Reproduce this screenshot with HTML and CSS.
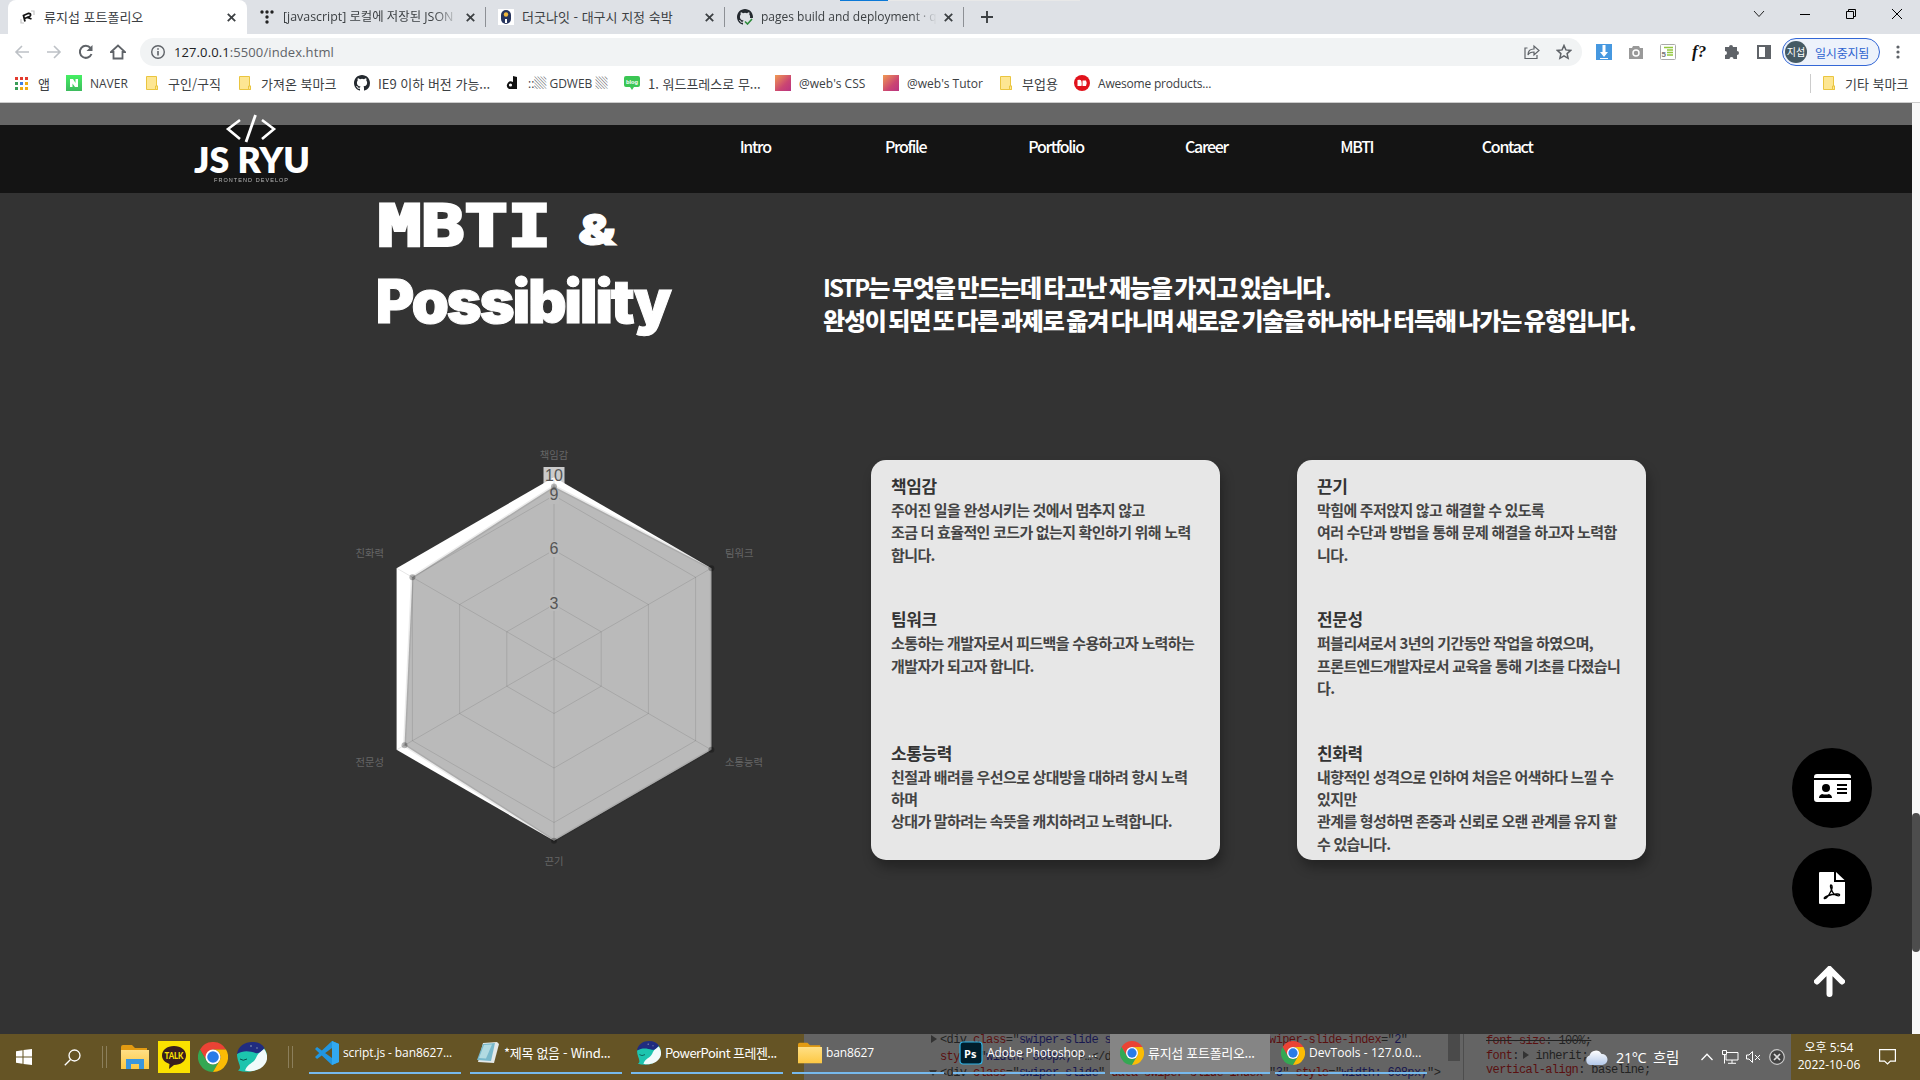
FILE: index.html
```html
<!DOCTYPE html>
<html lang="ko">
<head>
<meta charset="utf-8">
<title>류지섭 포트폴리오</title>
<link rel="stylesheet" href="styles.css">
</head>
<body>
<svg class="defs" width="0" height="0" aria-hidden="true">
  <defs>
    <linearGradient id="g-sunset" x1="0" y1="0" x2="1" y2="1"><stop offset="0" stop-color="#f09a52"/><stop offset=".6" stop-color="#cb4672"/><stop offset="1" stop-color="#b93482"/></linearGradient>
    <linearGradient id="g-folder" x1="0" y1="0" x2="0" y2="1"><stop offset="0" stop-color="#ffdf85"/><stop offset="1" stop-color="#fdc843"/></linearGradient>
    <linearGradient id="g-naver" x1="0" y1="0" x2="0" y2="1"><stop offset="0" stop-color="#45f063"/><stop offset="1" stop-color="#3dbb5e"/></linearGradient>
    <linearGradient id="g-cloud" x1="0" y1="0" x2="0" y2="1"><stop offset="0" stop-color="#fff"/><stop offset="1" stop-color="#b4c9ea"/></linearGradient>
    <linearGradient id="g-whale" x1="0" y1="0" x2="1" y2="1"><stop offset="0" stop-color="#2bd8c0"/><stop offset="1" stop-color="#0fae9d"/></linearGradient>
    <symbol id="i-close" viewBox="0 0 8 8"><path d="M.7.7l6.600 6.600M7.300.7L.7 7.300" stroke="#3c4043" stroke-width="1.600"/></symbol>
    <symbol id="i-folder" viewBox="0 0 16 16"><path d="M2.500 1.500h10v9.500h1v3.500h-11z" fill="#fde692" stroke="#eac53f"/><path d="M11.500 14.500v-3.500h2v3.500z" fill="#fde692" stroke="#eac53f"/></symbol>
    <symbol id="i-github" viewBox="0 0 16 16"><path fill="#24292f" d="M8 0C3.580 0 0 3.580 0 8c0 3.540 2.290 6.530 5.470 7.590.4.070.55-.17.55-.38 0-.19-.01-.82-.01-1.490-2.010.37-2.530-.49-2.690-.94-.09-.23-.48-.94-.82-1.130-.28-.15-.68-.52-.01-.53.63-.01 1.080.58 1.230.82.72 1.210 1.870.87 2.330.66.07-.52.28-.87.51-1.070-1.780-.2-3.640-.89-3.640-3.950 0-.87.31-1.590.82-2.150-.08-.2-.36-1.020.08-2.120 0 0 .67-.21 2.200.82a7.600 7.600 0 0 1 4 0c1.530-1.040 2.200-.82 2.200-.82.44 1.100.16 1.920.08 2.120.51.56.82 1.270.82 2.150 0 3.070-1.870 3.750-3.650 3.950.29.25.54.73.54 1.480 0 1.070-.01 1.930-.01 2.200 0 .21.15.46.55.38A8 8 0 0 0 16 8c0-4.420-3.580-8-8-8z"/></symbol>
    <symbol id="i-chrome" viewBox="0 0 48 48"><path fill="#ea4335" d="M3.200 12a24 24 0 0 1 41.600 0H24a12 12 0 0 0-10.400 6z"/><path fill="#ea4335" d="M3.200 12L13.600 30 24 12z"/><path fill="#34a853" d="M3.200 12a24 24 0 0 0 20.800 36L34.400 30A12 12 0 0 1 13.600 30z"/><path fill="#fbbc05" d="M24 48A24 24 0 0 0 44.800 12H24a12 12 0 0 1 10.400 18z"/><circle cx="24" cy="24" r="12" fill="#fff"/><circle cx="24" cy="24" r="9.300" fill="#287be8"/></symbol>
    <symbol id="i-whale" viewBox="0 0 30 30"><path fill="#1cc4ae" d="M0 12C0 21 6 25 1 28.500 16 33 29 25 30 15c0-5-2-8-4-10L4 9z"/><path fill="#f1fbfb" d="M8 28.500C11 21 16 22 19 16c2-4 3-6 8-9 4 5 4 11 1 15-4 6-13 8.500-20 6.500z"/><path fill="#202c80" d="M0 12C1 4 8 0 15 0c6 0 10 2 12.500 6-3 3-5 6-9 5C13 9 6 8 0 12z"/><circle cx="14" cy="4" r=".8" fill="#9ab"/><circle cx="20" cy="6" r=".7" fill="#9ab"/><path d="M3 17q3 2.500 7 0" stroke="#07514d" fill="none"/></symbol>
    <symbol id="i-bigfolder" viewBox="0 0 28 24"><path fill="#e29b12" d="M0 2q0-2 2-2h9l3 3h12v8H0z"/><path fill="url(#g-folder)" d="M0 5h28v19H0z"/></symbol>
  </defs>
</svg>

<div class="browser">
  <div class="tabs">
    <div class="tab tab-active">
      <svg class="fav" viewBox="0 0 16 16"><path d="M11 2h3v4M1 10v4h3" fill="none" stroke="#c5c5c5" stroke-width="1.200"/><path d="M5 12.500L3.500 6.500 8 4.500q3-.5 2.500 2Q10 8 7 8.500l-2.500 1M7.500 8.500l4 1.500" fill="none" stroke="#111" stroke-width="1.800"/></svg>
      <span class="tab-title ko">류지섭 포트폴리오</span><svg class="x"><use href="#i-close"/></svg>
    </div>
    <div class="tab">
      <svg class="fav" viewBox="0 0 16 16" fill="#222"><circle cx="3" cy="3" r="1.700"/><circle cx="8" cy="3" r="1.700"/><circle cx="13" cy="3" r="1.700"/><circle cx="8" cy="8" r="1.700"/><circle cx="8" cy="13" r="1.700"/></svg>
      <span class="tab-title tab-json fade">[javascript] 로컬에 저장된 JSON</span><svg class="x"><use href="#i-close"/></svg>
    </div>
    <div class="tab">
      <svg class="fav" viewBox="0 0 16 16"><path fill="#fff" d="M0 0h16v16H0z"/><rect x="3" y="1" width="10" height="14" rx="5" fill="#26345e"/><circle cx="8" cy="5.500" r="2.200" fill="#f0b83c"/><path d="M7 10h2v4H7z" fill="#fff"/></svg>
      <span class="tab-title ko">더굿나잇 - 대구시 지정 숙박</span><svg class="x"><use href="#i-close"/></svg>
    </div>
    <div class="tab">
      <svg class="fav" viewBox="0 0 16 16"><use href="#i-github"/><path d="M7 9h9v7H7z" fill="#dee1e6"/><path d="M8 12.500l2.500 2.500L15 10" fill="none" stroke="#2d8a3a" stroke-width="1.600"/></svg>
      <span class="tab-title tab-pages fade">pages build and deployment · q</span><svg class="x"><use href="#i-close"/></svg>
    </div>
    <svg class="plus" viewBox="0 0 12 12"><path d="M6 0v12M0 6h12" stroke="#3c4043" stroke-width="1.900"/></svg>
    <div class="window-buttons">
      <svg viewBox="0 0 12 12"><path d="M1 3l5 5.500L11 3" fill="none" stroke="#222"/></svg>
      <svg viewBox="0 0 12 12"><path d="M1 6.500h10" stroke="#000"/></svg>
      <svg viewBox="0 0 12 12"><path d="M1.500 3.500h7v7h-7zM3.500 3.500v-2h7v7h-2" fill="none" stroke="#000"/></svg>
      <svg viewBox="0 0 12 12"><path d="M1 1l10 10M11 1L1 11" stroke="#000"/></svg>
    </div>
    <div class="loading"></div>
  </div>

  <div class="toolbar">
    <div class="nav-buttons">
      <svg viewBox="0 0 16 16"><path d="M15 8H2M8 2L2 8l6 6" fill="none" stroke="#bdc1c6" stroke-width="1.600"/></svg>
      <svg viewBox="0 0 16 16"><path d="M1 8h13M8 2l6 6-6 6" fill="none" stroke="#bdc1c6" stroke-width="1.600"/></svg>
      <svg viewBox="0 0 16 16"><path d="M13.500 10A6 6 0 1 1 12.500 4" fill="none" stroke="#5f6368" stroke-width="2"/><path d="M14.500 1v6h-6z" fill="#5f6368"/></svg>
      <svg viewBox="0 0 16 16"><path d="M1 8l7-6.500L15 8h-2.500v6.500h-9V8z" fill="none" stroke="#5f6368" stroke-width="1.800"/></svg>
    </div>
    <div class="omnibox">
      <svg class="info" viewBox="0 0 16 16"><circle cx="8" cy="8" r="6.300" fill="none" stroke="#5f6368" stroke-width="1.400"/><path d="M8 7v4.500M8 4.200v1.600" stroke="#5f6368" stroke-width="1.600"/></svg>
      <span class="url"><b>127.0.0.1</b>:5500/index.html</span>
      <svg class="omni-icon" viewBox="0 0 16 16"><path d="M3.500 4H1v10.500h12V11M4 11c0-4 2-6 6-6V2l5 4.500-5 4.500V8c-3 0-5 1-6 3z" fill="none" stroke="#5f6368" stroke-width="1.200"/></svg>
      <svg class="omni-icon" viewBox="0 0 16 16"><path d="M8 1.500l1.900 4.400 4.800.5-3.600 3.200 1 4.700L8 11.900l-4.100 2.400 1-4.700L1.300 6.400l4.800-.5z" fill="none" stroke="#5f6368" stroke-width="1.500"/></svg>
    </div>
    <div class="extensions">
      <svg viewBox="0 0 16 16"><path fill="#4698e0" d="M0 0h16v16H0z"/><path d="M6.500 1h3v7H12l-4 5-4-5h2.500zM4 14h8v1H4z" fill="#fff"/></svg>
      <svg viewBox="0 0 16 16"><path d="M5 2h6l1 2h3v11H1V4h3z" fill="#999"/><circle cx="8" cy="9" r="3" fill="none" stroke="#fff" stroke-width="1.500"/></svg>
      <svg viewBox="0 0 16 16"><rect x=".5" y=".5" width="15" height="15" rx="1" fill="#fff" stroke="#aaa"/><path d="M4 3.500h9M7 6h6M7 8.500h6M7 11h6" stroke="#92c83e" stroke-width="1.400"/><text x="1.500" y="13" class="five">5</text></svg>
      <span class="fn">f?</span>
      <svg viewBox="0 0 16 16"><path fill="#5f6368" d="M5 3a2 2 0 0 1 4 0h4v4a2 2 0 0 1 0 4v4H9.500a2 2 0 0 0-4 0H1v-4a2 2 0 0 0 0-4V3z"/></svg>
      <svg viewBox="0 0 16 16"><path fill="#5f6368" fill-rule="evenodd" d="M1 1h14v14H1zm2 2v10h6V3z"/></svg>
    </div>
    <div class="profile"><span class="avatar">지섭</span><span class="paused">일시중지됨</span></div>
    <svg class="menu" viewBox="0 0 4 16" fill="#5f6368"><circle cx="2" cy="3" r="1.600"/><circle cx="2" cy="8" r="1.600"/><circle cx="2" cy="13" r="1.600"/></svg>
  </div>

  <div class="bookmarks">
    <div class="bm"><svg viewBox="0 0 16 16"><path d="M1 2h3v3H1zM6 2h3v3H6zM11 2h3v3h-3z" fill="#e33b2e"/><path d="M1 7h3v3H1zM1 12h3v3H1z" fill="#3a9d57"/><path d="M6 7h3v3H6z" fill="#3f7fe8"/><path d="M11 7h3v3h-3zM6 12h3v3H6zM11 12h3v3h-3z" fill="#f0ab14"/></svg><span class="ko">앱</span></div>
    <div class="bm"><svg viewBox="0 0 16 16"><path d="M0 0h16v16H0z" fill="url(#g-naver)"/><path d="M4 4h3l2.500 4V4H12v8H9L6.500 8.500V12H4z" fill="#fff"/></svg><span>NAVER</span></div>
    <div class="bm"><svg><use href="#i-folder"/></svg><span class="ko">구인/구직</span></div>
    <div class="bm"><svg><use href="#i-folder"/></svg><span class="ko">가져온 북마크</span></div>
    <div class="bm"><svg><use href="#i-github"/></svg><span class="ko">IE9 이하 버전 가능...</span></div>
    <div class="bm"><svg viewBox="0 0 16 16"><path d="M9 1l4 1v12H5a4 4 0 1 1 4-7z" fill="#111"/><circle cx="6.500" cy="10" r="1.600" fill="#fff"/></svg><span>::▒ GDWEB ▒</span></div>
    <div class="bm"><svg viewBox="0 0 16 16"><path d="M2 1h12q2 0 2 2v7q0 2-2 2h-4l-2 3-2-3H2q-2 0-2-2V3q0-2 2-2z" fill="#3bc654"/><text x="2" y="8.500" class="blog" textLength="12" lengthAdjust="spacingAndGlyphs">blog</text></svg><span class="ko">1. 워드프레스로 무...</span></div>
    <div class="bm"><svg viewBox="0 0 16 16"><path d="M0 0h16v16H0z" fill="url(#g-sunset)"/></svg><span>@web's CSS</span></div>
    <div class="bm"><svg viewBox="0 0 16 16"><path d="M0 0h16v16H0z" fill="url(#g-sunset)"/></svg><span>@web's Tutor</span></div>
    <div class="bm"><svg><use href="#i-folder"/></svg><span class="ko">부업용</span></div>
    <div class="bm"><svg viewBox="0 0 16 16"><circle cx="8" cy="8" r="8" fill="#e1121c"/><path d="M3.500 5q4-1 4 1.500Q8 9 7.500 11h-4zM8.500 5.500h3.500q1.500 2.500 0 5.500H8.500z" fill="#fff"/></svg><span class="awesome">Awesome products...</span></div>
    <div class="bm-other"><svg><use href="#i-folder"/></svg><span class="ko">기타 북마크</span></div>
  </div>
</div>

<div class="viewport">
  <div class="page">
    <header class="site-header">
      <svg class="logo" viewBox="0 0 116 72">
        <path d="M46 8L34 17l12 10M68 8l12 9-12 10" fill="none" stroke="#fff" stroke-width="2.600"/><path d="M61.500 3L52 30" stroke="#fff" stroke-width="2.800"/>
        <text class="logo-name" x="0" y="61" textLength="116" lengthAdjust="spacingAndGlyphs">JS RYU</text>
        <text class="logo-sub" x="20" y="69.500" textLength="74">FRONTEND DEVELOP</text>
      </svg>
      <nav><a>Intro</a><a>Profile</a><a>Portfolio</a><a>Career</a><a>MBTI</a><a>Contact</a></nav>
    </header>

    <section class="mbti">
      <div class="intro">
        <h2><svg width="310" height="150" viewBox="0 0 310 150">
          <text class="h-mono" x="0" y="52.500" textLength="173" lengthAdjust="spacingAndGlyphs">MBTI</text>
          <text class="h-amp" x="200" y="52" textLength="38" lengthAdjust="spacingAndGlyphs">&amp;</text>
          <text class="h-sans" x="-3" y="130" textLength="297">Possibility</text>
        </svg></h2>
        <p><span class="latin">ISTP</span>는 무엇을 만드는데 타고난 재능을 가지고 있습니다.<br>완성이 되면 또 다른 과제로 옮겨 다니며 새로운 기술을 하나하나 터득해 나가는 유형입니다.</p>
      </div>

      <div class="details">
        <svg class="radar" viewBox="-224 -229 470 450">
          <path d="M0-181.700L157.400-90.850V90.850L0 181.700-157.400 90.850V-90.850z" fill="#fff"/>
          <rect x="-10.500" y="-192" width="21" height="17" class="tick-box"/>
          <path d="M0-172.600L157.400-90.850V90.850L0 181.700-149.500 86.300-141.600-81.800z" class="area"/>
          <g class="grid">
            <path d="M0-54.500L47.200-27.250V27.250L0 54.500-47.200 27.250V-27.250z"/>
            <path d="M0-109L94.400-54.500V54.500L0 109-94.400 54.500V-54.500z"/>
            <path d="M0-163.500L141.600-81.750V81.750L0 163.500-141.600 81.750V-81.750z"/>
            <path d="M0-181.700V181.700M-157.400-90.850L157.400 90.850M157.400-90.850L-157.400 90.850"/>
          </g>
          <g class="tick-gap"><path d="M-5-167h10v12H-5zM-5-118h10v16H-5zM-5-64h10v16H-5z"/></g>
          <g class="dots"><circle cy="-172.600" r="3"/><circle cx="157.400" cy="-90.850" r="3"/><circle cx="157.400" cy="90.850" r="3"/><circle cy="181.700" r="3"/><circle cx="-149.500" cy="86.300" r="3"/><circle cx="-141.600" cy="-81.800" r="3"/></g>
          <g class="ticks"><text y="-178">10</text><text y="-159">9</text><text y="-105">6</text><text y="-50">3</text></g>
          <g class="axis">
            <text y="-200.500" text-anchor="middle">책임감</text><text x="171" y="-102">팀워크</text><text x="171" y="107">소통능력</text>
            <text y="206" text-anchor="middle">끈기</text><text x="-170" y="107" text-anchor="end">전문성</text><text x="-170" y="-102" text-anchor="end">친화력</text>
          </g>
        </svg>

        <div class="card">
          <article><h3>책임감</h3><p>주어진 일을 완성시키는 것에서 멈추지 않고<br>조금 더 효율적인 코드가 없는지 확인하기 위해 노력<br>합니다.</p></article>
          <article><h3>팀워크</h3><p>소통하는 개발자로서 피드백을 수용하고자 노력하는<br>개발자가 되고자 합니다.</p></article>
          <article><h3>소통능력</h3><p>친절과 배려를 우선으로 상대방을 대하려 항시 노력<br>하며<br>상대가 말하려는 속뜻을 캐치하려고 노력합니다.</p></article>
        </div>
        <div class="card">
          <article><h3>끈기</h3><p>막힘에 주저앉지 않고 해결할 수 있도록<br>여러 수단과 방법을 통해 문제 해결을 하고자 노력합<br>니다.</p></article>
          <article><h3>전문성</h3><p>퍼블리셔로서 3년의 기간동안 작업을 하였으며,<br>프론트엔드개발자로서 교육을 통해 기초를 다졌습니<br>다.</p></article>
          <article><h3>친화력</h3><p>내향적인 성격으로 인하여 처음은 어색하다 느낄 수<br>있지만<br>관계를 형성하면 존중과 신뢰로 오랜 관계를 유지 할<br>수 있습니다.</p></article>
        </div>
      </div>
    </section>

    <aside class="floating">
      <a class="round"><svg width="37" height="28" viewBox="0 0 37 28"><path fill="#fff" fill-rule="evenodd" d="M3 0h31q3 0 3 3v1H0V3q0-3 3-3zM0 6h37v19q0 3-3 3H3q-3 0-3-3zm23 4v2h10v-2zm0 4v2h10v-2zm0 4v2h10v-2zM12 10a4 4 0 1 0 0 8 4 4 0 1 0 0-8zM8 20q-3 1-3 4h13q0-3-3-4-3 1-7 0z"/></svg></a>
      <a class="round"><svg width="26" height="32" viewBox="0 0 26 32"><path fill="#fff" d="M1 0h14v10h11v21q0 1-1 1H1q-1 0-1-1V1q0-1 1-1z"/><path fill="#fff" d="M17 0l8.500 8H17z"/><path d="M12 13c1.500 0 1.500 3 0 6-2 4-5 8-6.500 7.500S8 23.500 13 22.500s8-.5 7.500.7-5 .5-7-3.200-2.500-7-1.500-7z" fill="none" stroke="#000" stroke-width="1.400"/></svg></a>
      <a class="to-top"><svg width="31" height="31" viewBox="0 0 31 31"><path d="M15.500 28V4M3 15.500L15.500 3 28 15.500" fill="none" stroke="#fff" stroke-width="6" stroke-linecap="round" stroke-linejoin="round"/></svg></a>
    </aside>
  </div>
  <div class="scrollbar"><div class="thumb"></div></div>
</div>

<div class="taskbar">
  <div class="behind">
    <pre class="markup"><i class="tri right"></i>&lt;div <em>class</em>="<q>swiper-slide swiper-slide-next</q>" <em>data-swiper-slide-index</em>="<q>2</q>"
<em>style</em>="<q>width: 608px;</q>"&gt;…&lt;/div&gt;
<i class="tri down"></i>&lt;div <em>class</em>="<q>swiper-slide</q>" <em>data-swiper-slide-index</em>="<q>3</q>" <em>style</em>="<q>width: 608px;</q>"&gt;</pre>
    <div class="pane-scroll"></div>
    <pre class="rules"><s><em>font-size</em>: 100%;</s>
<em>font</em>:<i class="tri inline"></i> inherit;
<em>vertical-align</em>: baseline;</pre>
  </div>
  <div class="start"><svg width="16" height="16" viewBox="0 0 16 16"><path fill="#fff" d="M0 2.200l6.500-.9v6.200H0zM7.500 1.100L16 0v7.500H7.500zM0 8.500h6.500v6.200L0 13.800zM7.500 8.500H16V16l-8.500-1.100z"/></svg></div>
  <div class="start"><svg width="17" height="17" viewBox="0 0 17 17"><circle cx="10.500" cy="6.500" r="5.500" fill="none" stroke="#fff" stroke-width="1.300"/><path d="M6.500 10.500L.8 16.200" stroke="#fff" stroke-width="1.300"/></svg></div>
  <div class="grip"></div>
  <div class="launchers">
    <svg width="28" height="24"><use href="#i-bigfolder"/><path d="M5 24V14h18v10h-5v-5h-8v5z" fill="#3a96dd"/></svg>
    <svg width="32" height="32" viewBox="0 0 32 32"><path d="M0 0h32v32H0z" fill="#fae100"/><path d="M16 5c7 0 12 4 12 9.500S23 24 16 24l-5 4 .5-5C7 21.500 4 18.500 4 14.500 4 9 9 5 16 5z" fill="#371d1e"/><text x="6.500" y="18" class="talk" textLength="19" lengthAdjust="spacingAndGlyphs">TALK</text></svg>
    <svg width="30" height="30"><use href="#i-chrome"/></svg>
    <svg width="30" height="30"><use href="#i-whale"/></svg>
  </div>
  <div class="grip grip-2"></div>
  <div class="tasks">
    <div class="task"><svg viewBox="0 0 24 24"><path d="M17 0l7 3v18l-7 3L2 10 0 8l2-2 15 11V7L2 18l-2-2z" fill="#2196e0"/><path d="M17 0l7 3v18l-7 3z" fill="#32a9f2"/></svg><span>script.js - ban8627...</span></div>
    <div class="task"><svg viewBox="0 0 24 24"><path d="M7 2l14-1 2 2-5 19-16-1z" fill="#e4e9e9"/><path d="M7 3l12-1-4 18-14-1z" fill="#79b9cc"/><path d="M8 4l8-.5-6 14-7-.5z" fill="#b2dbe2"/></svg><span class="ko">*제목 없음 - Wind...</span></div>
    <div class="task"><svg><use href="#i-whale"/></svg><span class="ko tight">PowerPoint 프레젠...</span></div>
    <div class="task"><svg><use href="#i-bigfolder"/></svg><span>ban8627</span></div>
    <div class="task"><svg viewBox="0 0 24 24"><rect x="1" y="1" width="22" height="22" rx="3" fill="#001d2b" stroke="#2db4e8" stroke-width="1.200"/><text x="5" y="16.500" class="ps">Ps</text></svg><span class="narrow">Adobe Photoshop ...</span></div>
    <div class="task task-active"><svg><use href="#i-chrome"/></svg><span class="ko">류지섭 포트폴리오...</span></div>
    <div class="task"><svg><use href="#i-chrome"/></svg><span class="wide">DevTools - 127.0.0...</span></div>
  </div>
  <div class="tray">
    <svg class="cloud" width="23" height="15" viewBox="0 0 23 15"><path d="M5 15a5 5 0 0 1-.5-9.500A6.500 6.500 0 0 1 16.500 4a5.500 5.500 0 0 1 1 11z" fill="url(#g-cloud)"/></svg>
    <span class="weather">21°C&nbsp; 흐림</span>
    <svg class="chev" width="12" height="8" viewBox="0 0 12 8"><path d="M.5 7L6 1.200 11.500 7" fill="none" stroke="#fff" stroke-width="1.300"/></svg>
    <svg class="net" width="17" height="14" viewBox="0 0 17 14"><path d="M5 2.500h11v7.500H4V5M10 10v3M6 13.300h8M.5.500h4v4h-4zM2.500 4.500v9" fill="none" stroke="#fff"/></svg>
    <svg class="vol" width="15" height="12" viewBox="0 0 15 12"><path d="M.5 4v4H3l3.500 3.500V.5L3 4zM9 4l5 5M14 4L9 9" fill="none" stroke="#fff"/></svg>
    <svg class="err" width="16" height="16" viewBox="0 0 16 16"><circle cx="8" cy="8" r="7.300" fill="#444" stroke="#c9c9c9" stroke-width="1.200"/><path d="M5 5l6 6M11 5l-6 6" stroke="#ddd" stroke-width="1.700"/></svg>
    <div class="clock"><span>오후 5:54</span><span>2022-10-06</span></div>
    <svg class="notice" width="17" height="16" viewBox="0 0 17 16"><path d="M.6.600h15.800v11.500h-5L8.500 15l-3-2.900H.6z" fill="none" stroke="#fff" stroke-width="1.200"/></svg>
  </div>
</div>
</body>
</html>
```
FILE: styles.css
```css
* { box-sizing: border-box; }
body { margin: 0; width: 1920px; height: 1080px; overflow: hidden; font-family: "Open Sans", "Noto Sans CJK KR", sans-serif; font-size: 12px; color: #3c4043; white-space: nowrap; }
svg { display: block; flex: none; }
.defs { position: absolute; }
.ko { font-family: "Noto Sans CJK KR", sans-serif; font-size: 13px; font-weight: 400; }

/* browser frame */
.browser { height: 103px; background: #fff; border-bottom: 1px solid #ccc; }
.tabs { position: relative; display: flex; align-items: center; height: 34px; padding-left: 8px; background: #dee1e6; }
.tab { display: flex; align-items: center; width: 239px; height: 34px; padding: 0 11px 0 12px; }
.tab::after { content: ""; width: 1px; height: 20px; margin-left: 10px; margin-right: -11px; background: #8d9095; }
.tab-active { background: #fff; border-radius: 8px 8px 0 0; }
.tab-active::after { background: none; }
.fav { width: 16px; height: 16px; }
.tab-title { flex: 1; min-width: 0; margin: 0 7px 0 8px; overflow: hidden; line-height: 20px; }
.tab-json { font-size: 12.400px; }
.fade { -webkit-mask-image: linear-gradient(90deg, #000 86%, transparent); mask-image: linear-gradient(90deg, #000 86%, transparent); }
.x { width: 9px; height: 9px; }
.plus { width: 12px; height: 12px; margin-left: 17px; }
.window-buttons { display: flex; gap: 34px; margin-left: auto; margin-right: 17px; height: 22px; align-items: center; align-self: flex-start; padding-top: 6px; }
.window-buttons svg { width: 12px; height: 12px; }
.loading { position: absolute; left: 840px; top: 0; width: 240px; height: 1px; background: linear-gradient(90deg, #0a78d7 48px, #e8e8e8 48px); }

.toolbar { display: flex; align-items: center; height: 36px; }
.nav-buttons { display: flex; gap: 16px; width: 140px; padding-left: 14px; }
.nav-buttons svg { width: 16px; height: 16px; }
.omnibox { display: flex; align-items: center; width: 1442px; height: 28px; border-radius: 14px; background: #f1f3f4; padding-right: 10px; }
.info { width: 16px; height: 16px; margin-left: 10px; }
.url { flex: 1; margin-left: 8px; font-size: 13px; letter-spacing: .1px; color: #5f6368; }
.url b { font-weight: 400; color: #202124; }
.omni-icon { width: 16px; height: 16px; margin-left: 16px; }
.extensions { display: flex; gap: 16px; margin-left: 14px; }
.extensions svg, .fn { width: 16px; height: 16px; }
.fn { font: italic bold 17px/15px "Liberation Serif", serif; color: #111; }
.five { font: bold 8px "Liberation Sans", sans-serif; fill: #777; }
.blog { font: bold 6px "Liberation Sans", sans-serif; fill: #fff; }
.profile { display: flex; align-items: center; width: 98px; height: 28px; margin-left: 10px; border: 1px solid #3367d6; border-radius: 14px; background: #edf2fb; color: #2f64d0; }
.avatar { width: 22px; height: 22px; margin-left: 2px; border-radius: 50%; background: #455a64; color: #fff; font: 10px/21px "Noto Sans CJK KR", sans-serif; text-align: center; }
.paused { margin-left: 8px; font: 400 12px "Noto Sans CJK KR", sans-serif; letter-spacing: -.2px; }
.menu { width: 4px; height: 16px; margin-left: 16px; }

.bookmarks { display: flex; height: 26px; align-items: center; padding-left: 14px; }
.bm, .bm-other { display: flex; align-items: center; gap: 8px; }
.bm svg, .bm-other svg { width: 16px; height: 16px; }
.bm:nth-child(1) { width: 52px; }
.bm:nth-child(2) { width: 78px; }
.bm:nth-child(3) { width: 93px; }
.bm:nth-child(4) { width: 117px; }
.bm:nth-child(5) { width: 150px; }
.bm:nth-child(6) { width: 120px; }
.bm:nth-child(7) { width: 151px; }
.bm:nth-child(8) { width: 108px; }
.bm:nth-child(9) { width: 115px; }
.bm:nth-child(10) { width: 76px; }
.bm:nth-child(11) { width: 140px; }
.awesome { letter-spacing: -.2px; }
.bm-other { margin-left: auto; padding-left: 10px; border-left: 1px solid #ccc; width: 110px; }

/* page */
.viewport { display: flex; height: 931px; }
.page { position: relative; width: 1912px; background: #333; }
.scrollbar { width: 8px; background: #f8f8f8; padding-top: 710px; }
.thumb { height: 139px; border-radius: 4px; background: #4d4d4d; }
.site-header { display: flex; height: 90px; background: linear-gradient(#666 22px, #141414 22px); }
.logo { width: 116px; height: 72px; margin: 9px 0 0 194px; }
.logo text { fill: #fff; }
.logo-name { font: 800 35px Lato, sans-serif; }
.logo-sub { font: 5.500px "Liberation Sans", sans-serif; opacity: .65; }
.site-header nav { display: grid; grid-template-columns: repeat(6, 150.400px); margin-left: 370px; padding-top: 31px; text-align: center; font: 500 16px/24px "Noto Sans CJK KR", sans-serif; letter-spacing: -1.300px; color: #fff; }

.mbti { height: 841px; }
.intro { display: flex; height: 237px; padding-left: 378px; }
.intro h2 { margin: 0; width: 445px; }
.intro h2 text { fill: #fff; stroke: #fff; }
.h-mono { font: bold 57px "DejaVu Sans Mono", monospace; stroke-width: 3px; }
.h-amp { font: 900 42px Inter, sans-serif; stroke-width: 1px; }
.h-sans { font: 900 60px Inter, sans-serif; }
.intro p { margin: 78px 0 0; font: 900 24px/32.500px "Noto Sans CJK KR", sans-serif; letter-spacing: -1.200px; word-spacing: -2.800px; color: #fff; }
.latin { font-weight: 700; letter-spacing: -2px; }

.details { display: flex; padding-left: 330px; }
.radar { width: 470px; height: 450px; margin-right: 71px; }
.area { fill: rgba(0, 0, 0, .27); stroke: rgba(0, 0, 0, .08); stroke-width: 3; }
.grid { fill: none; stroke: rgba(0, 0, 0, .1); }
.dots { fill: rgba(0, 0, 0, .28); }
.tick-box { fill: rgba(255, 255, 255, .75); }
.tick-gap { fill: #bbb; }
.ticks { font: 16px "Liberation Sans", sans-serif; fill: #555; text-anchor: middle; }
.axis { font: 400 10.300px "Noto Sans CJK KR", sans-serif; fill: #666; }
.card { display: grid; grid-template-rows: repeat(3, 133.400px); width: 349px; height: 400px; margin-top: 30px; padding: 0 20px; border-radius: 15px; background: #e7e7e7; box-shadow: 3px 8px 12px rgba(0, 0, 0, .3); font-family: "Noto Sans CJK KR", sans-serif; }
.card + .card { margin-left: 77px; }
.card h3 { margin: 0; padding-top: 13px; font-size: 17px; line-height: 26px; font-weight: 700; letter-spacing: -.4px; color: #333; }
.card p { margin: 0; font-size: 15px; line-height: 22.300px; font-weight: 700; letter-spacing: -.6px; word-spacing: -.4px; color: #444; }

.floating { position: absolute; left: 1792px; top: 645px; width: 80px; display: flex; flex-direction: column; gap: 20px; }
.round { display: flex; align-items: center; justify-content: center; height: 80px; border-radius: 50%; background: #000; }
.to-top { padding: 18px 0 0 22px; }

/* taskbar */
.taskbar { position: relative; display: flex; align-items: center; height: 46px; background: #655425; color: #fff; overflow: hidden; }
.taskbar > * { position: relative; }
.taskbar .behind { position: absolute; left: 804px; top: 0; display: flex; width: 987px; height: 46px; background: #646464; color: #222; }
.behind pre { margin: 0; font: 12px/16.500px "Liberation Mono", monospace; letter-spacing: -.62px; }
.behind em { font-style: normal; color: #5a1010; }
.behind q { quotes: none; color: #17174f; }
.markup { width: 644px; padding-left: 136px; }
.behind .markup { margin-top: -2px; }
.pane-scroll { width: 12px; height: 27px; background: #4a4a4a; }
.behind .rules { margin-left: 3px; padding: 0 0 0 22px; border-left: 1px solid #4d4d4d; line-height: 14.500px; height: 46px; width: 310px; }
.tri { display: inline-block; width: 0; border: 4px solid transparent; border-left: 6px solid #333; border-right: 0; }
.right { margin-left: -9px; margin-right: 3px; }
.down { border: 4px solid transparent; border-top: 6px solid #333; border-bottom: 0; margin-left: -11px; margin-right: 3px; }
.inline { margin-left: 4px; }
.start { display: flex; justify-content: center; width: 48px; }
.grip { width: 5px; height: 22px; margin: 0 5px 0 6px; border: solid #8c7f5b; border-width: 0 1px; }
.launchers { display: grid; grid-template-columns: repeat(4, 39px); place-items: center; margin-left: 3.500px; }
.grip-2 { margin: 0 16px 0 16.500px; }
.tasks { display: flex; gap: 9px; height: 46px; }
.task { display: flex; align-items: center; width: 152px; height: 40px; padding: 0 0 1px 6px; border-bottom: 2px solid #76b9ed; }
.task svg { width: 24px; height: 24px; margin-right: 4px; }
.task span { letter-spacing: -.1px; }
.task .ko { letter-spacing: -.3px; }
.task .tight { letter-spacing: -.55px; }
.task .narrow { letter-spacing: -.15px; }
.task .wide { letter-spacing: .05px; }
.task-active { width: 160px; margin: 0 -4px; padding-left: 10px; background: #858585; }
.talk { font: 900 9px Lato, sans-serif; fill: #fae100; }
.ps { font: bold 11px "Open Sans", sans-serif; fill: #fff; }
.tray { display: flex; align-items: center; margin-left: 158px; }
.weather { width: 68px; margin: -1px 17px 0 8px; font: 400 14.500px "Open Sans", "Noto Sans CJK KR", sans-serif; letter-spacing: -.4px; }
.chev { margin-right: 0; }
.net { margin-left: 9px; }
.vol { margin-left: 7px; }
.err { margin-left: 8px; }
.clock { width: 88px; display: flex; flex-direction: column; text-align: center; line-height: 17px; margin-top: -2px; }
.notice { margin-left: 6px; }
```
